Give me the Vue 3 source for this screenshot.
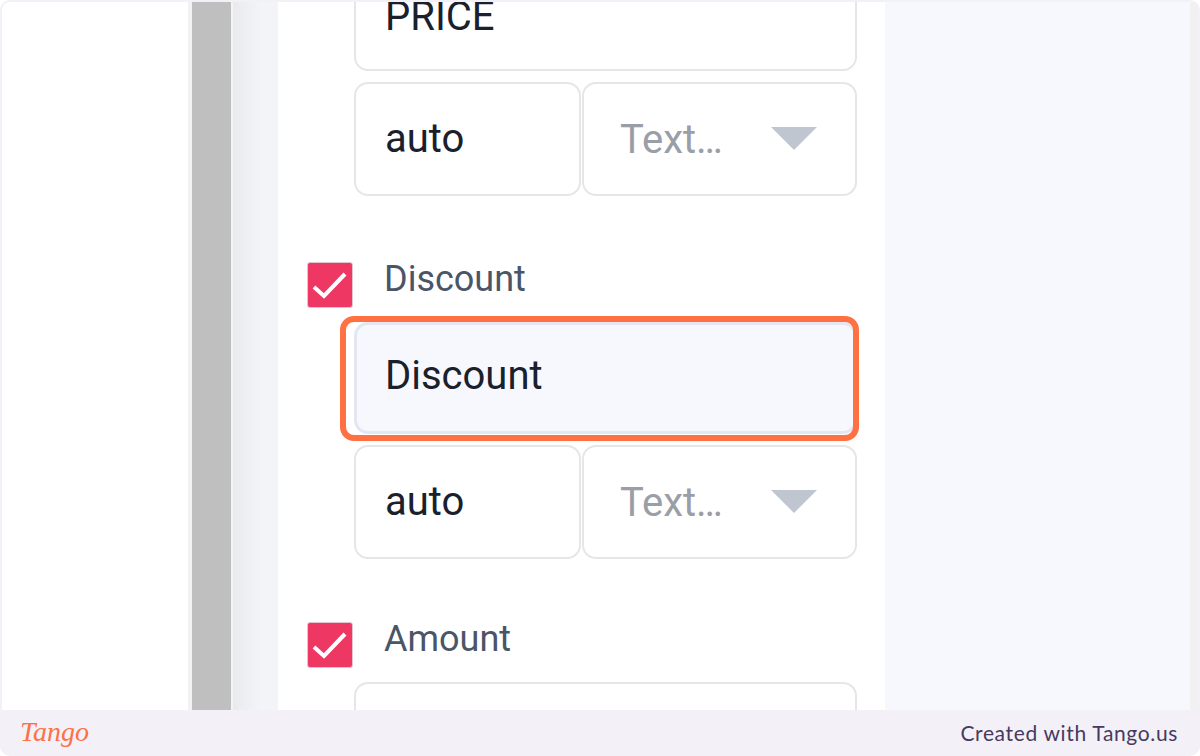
<script setup>
const fields = [
  { id: "price", label: "", value: "PRICE", clipped: true },
  { id: "discount", label: "Discount", value: "Discount", active: true },
];
</script>

<template>
  <div class="frame">
    <div class="shot">
      <div class="blank"></div>
      <div class="divider"></div>
      <div class="shade"></div>
      <div class="panel">
        <div v-for="f in fields" :key="f.id" class="group" :class="{ first: f.clipped }">
          <div v-if="f.label" class="label-row">
            <span class="check">
              <svg width="46" height="46" viewBox="0 0 46 46">
                <path d="M7 25l10 9L38 12" fill="none" stroke="#fff" stroke-width="4" />
              </svg>
            </span>
            <span class="label">{{ f.label }}</span>
          </div>
          <div class="inputs">
            <div class="box name-box" :class="{ clipped: f.clipped, active: f.active }">{{ f.value }}</div>
            <div class="pair">
              <div class="box width-box">auto</div>
              <div class="box type-box">
                <span class="type-text">Text…</span>
                <span class="caret"></span>
              </div>
            </div>
          </div>
        </div>
        <div class="group last">
          <div class="label-row">
            <span class="check">
              <svg width="46" height="46" viewBox="0 0 46 46">
                <path d="M7 25l10 9L38 12" fill="none" stroke="#fff" stroke-width="4" />
              </svg>
            </span>
            <span class="label">Amount</span>
          </div>
          <div class="inputs">
            <div class="box name-box tail"></div>
          </div>
        </div>
      </div>
      <div class="rest"></div>
      <div class="scrollbar"></div>
    </div>
    <div class="footer">
      <span class="logo">Tango</span>
      <span class="credit">Created with Tango.us</span>
    </div>
  </div>
</template>

<style>
html,
body {
  margin: 0;
  background: #fff;
}
</style>

<style scoped>
.frame {
  width: 1200px;
  height: 756px;
  display: flex;
  flex-direction: column;
  background: #f3f1f7;
  border-radius: 10px;
  overflow: hidden;
}
.shot {
  height: 708px;
  margin: 2px 2px 0 2px;
  display: flex;
  background: #fff;
  border-radius: 8px 8px 0 0;
  overflow: hidden;
}
.blank {
  width: 186px;
  border-right: 4px solid #f2f2f2;
}
.divider {
  width: 39px;
  background: #bfbfbf;
  border-right: 2px solid #f4f4f4;
}
.shade {
  width: 45px;
  background: linear-gradient(90deg, #e9eaee, #f3f4f8 60%);
}
.panel {
  width: 607px;
  background: #fff;
  overflow: hidden;
  font-family: Roboto, sans-serif;
}
.rest {
  flex: 1;
  background: #f7f8fd;
}
.scrollbar {
  width: 8px;
  background: #f1f1f1;
}
.group {
  margin-bottom: 61px;
}
.group.first {
  margin-bottom: 64px;
}
.group.last {
  margin-bottom: 0;
}
.label-row {
  display: flex;
  align-items: flex-start;
  height: 62px;
  padding-left: 29px;
}
.check {
  width: 46px;
  height: 46px;
  box-sizing: border-box;
  margin-top: 2px;
  background: #ee3763;
  border: 1px solid #e5c3cf;
  border-radius: 3px;
  display: flex;
  align-items: center;
  justify-content: center;
  flex-shrink: 0;
}
.check svg {
  flex-shrink: 0;
  margin: -1px;
}
.label {
  margin-left: 31px;
  margin-top: -2px;
  font-size: 36px;
  line-height: 42px;
  color: #4a5568;
}
.inputs {
  margin-left: 76px;
  width: 503px;
  display: flex;
  flex-direction: column;
  gap: 11px;
}
.pair {
  display: flex;
}
.box {
  box-sizing: border-box;
  background: #fff;
  border: 2px solid #e6e6e6;
  border-radius: 14px;
  font-size: 40px;
  color: #1a202c;
  display: flex;
  align-items: center;
  padding-left: 29px;
  padding-bottom: 2px;
}
.name-box {
  height: 112px;
}
.name-box.clipped {
  height: 69px;
  border-top: none;
  border-top-left-radius: 0;
  border-top-right-radius: 0;
  align-items: flex-start;
  line-height: 30px;
}
.name-box.active {
  position: relative;
  background: #f7f8fd;
  border: 3px solid #e2e7f2;
  padding-left: 28px;
  padding-bottom: 6px;
}
.name-box.active::after {
  content: "";
  position: absolute;
  inset: -9px -5px -10px -17px;
  border: 6px solid #ff7043;
  border-radius: 14px;
  pointer-events: none;
}
.name-box.tail {
  height: 60px;
  border-bottom: none;
  border-bottom-left-radius: 0;
  border-bottom-right-radius: 0;
}
.width-box {
  width: 227px;
  height: 114px;
}
.type-box {
  width: 275px;
  margin-left: 1px;
  height: 114px;
  padding-left: 36px;
  color: #9a9ea6;
}
.type-text {
  width: 151px;
  margin-top: 2px;
}
.caret {
  width: 0;
  height: 0;
  margin-top: 0;
  border-left: 23px solid transparent;
  border-right: 23px solid transparent;
  border-top: 23px solid #c0c6d0;
}
.footer {
  flex: 1;
  display: flex;
  align-items: center;
  justify-content: space-between;
  padding: 0 22px 2px 20px;
}
.logo {
  font-family: "Liberation Serif", serif;
  font-style: italic;
  font-size: 28px;
  color: #ff7043;
}
.credit {
  font-family: Lato, sans-serif;
  font-size: 21px;
  letter-spacing: 0.65px;
  color: #47395f;
}
</style>
